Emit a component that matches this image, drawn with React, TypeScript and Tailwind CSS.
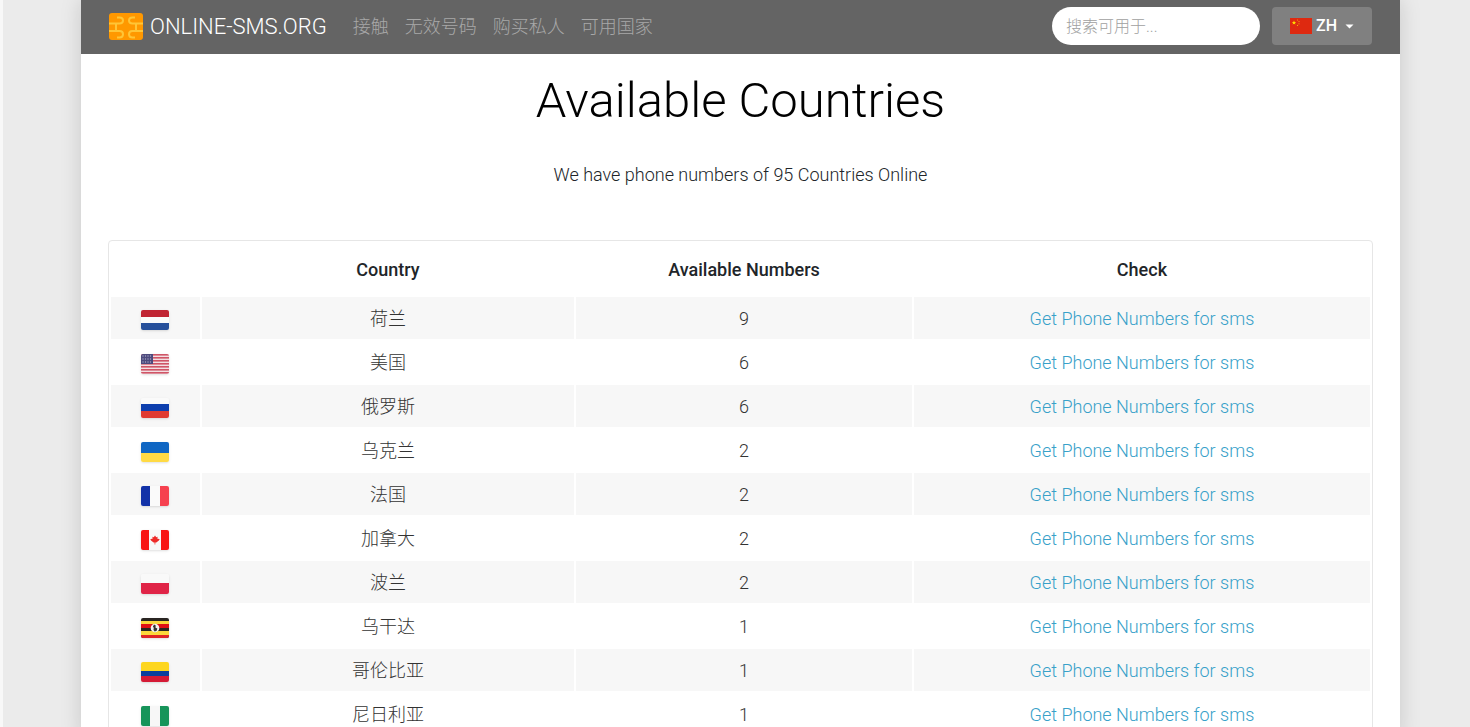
import type { ReactNode } from "react";

type Country = {
  code: string;
  name: string;
  numbers: number;
  flag: ReactNode;
};

const starDots = [2, 4.5, 7, 9.5].flatMap((x) => [2, 5, 8].map((y) => ({ x, y })));

const countries: Country[] = [
  {
    code: "nl",
    name: "荷兰",
    numbers: 9,
    flag: (
      <>
        <rect width="28" height="7" fill="#c02433" />
        <rect y="7" width="28" height="6" fill="#fafafa" />
        <rect y="13" width="28" height="7" fill="#27509b" />
      </>
    ),
  },
  {
    code: "us",
    name: "美国",
    numbers: 6,
    flag: (
      <>
        <rect width="28" height="20" fill="#f3dfe2" />
        {[0, 3, 6, 9, 12, 15, 18].map((y) => (
          <rect key={y} y={y} width="28" height="1.6" fill="#cf5566" />
        ))}
        <rect width="12" height="10" fill="#4c4a7d" />
        {starDots.map(({ x, y }) => (
          <circle key={`${x}-${y}`} cx={x} cy={y} r="0.7" fill="#a9a8c4" />
        ))}
      </>
    ),
  },
  {
    code: "ru",
    name: "俄罗斯",
    numbers: 6,
    flag: (
      <>
        <rect width="28" height="7" fill="#fafafa" />
        <rect y="6" width="28" height="8" fill="#0d3fae" />
        <rect y="13" width="28" height="7" fill="#e03a31" />
      </>
    ),
  },
  {
    code: "ua",
    name: "乌克兰",
    numbers: 2,
    flag: (
      <>
        <rect width="28" height="11" fill="#0f66c3" />
        <rect y="11" width="28" height="9" fill="#ffda44" />
      </>
    ),
  },
  {
    code: "fr",
    name: "法国",
    numbers: 2,
    flag: (
      <>
        <rect width="10" height="20" fill="#1232a8" />
        <rect x="9" width="10" height="20" fill="#fafafa" />
        <rect x="19" width="9" height="20" fill="#f6414f" />
      </>
    ),
  },
  {
    code: "ca",
    name: "加拿大",
    numbers: 2,
    flag: (
      <>
        <rect width="28" height="20" fill="#f8f8f8" />
        <rect width="8" height="20" fill="#f81614" />
        <rect x="20" width="8" height="20" fill="#f81614" />
        <path
          d="M14 5.5l1.2 1.8 1.4-.5-.2 2 2.3.2-.8 1.6-2.6 2h-1v2h-.7v-2h-1l-2.6-2-.7-1.6 2.3-.2-.2-2 1.4.5z"
          fill="#ee2a28"
        />
      </>
    ),
  },
  {
    code: "pl",
    name: "波兰",
    numbers: 2,
    flag: (
      <>
        <rect width="28" height="10" fill="#f9f9f9" />
        <rect y="9" width="28" height="11" fill="#e02447" />
      </>
    ),
  },
  {
    code: "ug",
    name: "乌干达",
    numbers: 1,
    flag: (
      <>
        <rect width="28" height="20" fill="#292522" />
        <rect y="3" width="28" height="4" fill="#fbd63a" />
        <rect y="6" width="28" height="4" fill="#df1014" />
        <rect y="13" width="28" height="4" fill="#fbd63a" />
        <rect y="17" width="28" height="3" fill="#e02324" />
        <circle cx="14" cy="10" r="4.3" fill="#f1f1f1" />
        <path d="M13 6.6l1.8 1-.4 2 1.9.8-.6 2.4-2 .8-1.2-1.6.3-2.2-.9-1z" fill="#35312f" />
      </>
    ),
  },
  {
    code: "co",
    name: "哥伦比亚",
    numbers: 1,
    flag: (
      <>
        <rect width="28" height="10" fill="#fdd61e" />
        <rect y="9" width="28" height="6" fill="#0a3f9c" />
        <rect y="14" width="28" height="6" fill="#d51a35" />
      </>
    ),
  },
  {
    code: "ng",
    name: "尼日利亚",
    numbers: 1,
    flag: (
      <>
        <rect width="28" height="20" fill="#f7f7f7" />
        <rect width="9" height="20" fill="#17945a" />
        <rect x="19" width="9" height="20" fill="#17945a" />
      </>
    ),
  },
];

const navLinks = ["接触", "无效号码", "购买私人", "可用国家"];

const Logo = () => (
  <svg width="34" height="27" viewBox="0 0 34 27" aria-hidden="true">
    <rect width="34" height="27" rx="3" fill="#ff9800" />
    <g fill="none" stroke="#ffc536" strokeWidth="2">
      <path d="M0 10.5H10.500c2.200 0 3.500-1.200 3.500-3s-1.300-3-3.500-3H8M0 18H10.500c2.200 0 3.500 1.200 3.500 3.200s-1.300 3.200-3.500 3.200H8M7 10.500V18" />
      <path d="M34 10.500H23.500c-2.200 0-3.500-1.200-3.500-3s1.300-3 3.500-3H26M34 18H23.500c-2.200 0-3.500 1.200-3.500 3.200s1.300 3.200 3.500 3.200H26M27 10.500V18" />
    </g>
  </svg>
);

const ChinaFlag = () => (
  <svg width="22" height="16" viewBox="0 0 22 16" aria-hidden="true">
    <rect width="22" height="16" fill="#de2910" />
    <path d="M4 2.500l.6 1.500h1.600l-1.300 1 .5 1.600L4 5.700l-1.400.9.5-1.600-1.300-1h1.600z" fill="#ffde00" />
    <g fill="#f7a80c">
      <circle cx="7.500" cy="2" r="0.600" />
      <circle cx="9" cy="3.600" r="0.600" />
      <circle cx="9" cy="5.800" r="0.600" />
      <circle cx="7.500" cy="7.400" r="0.600" />
    </g>
  </svg>
);

const Flag = ({ country }: { country: Country }) => (
  <svg
    className="mx-auto mt-1 block overflow-hidden rounded-xs shadow-sm"
    width="28"
    height="20"
    viewBox="0 0 28 20"
    role="img"
    aria-label={country.name}
  >
    {country.flag}
  </svg>
);

const Navbar = () => (
  <nav className="flex h-[54px] items-center bg-[#646464] px-7 pb-[2px]">
    <a href="#" className="flex items-center gap-[7px] text-[22px] font-light text-white">
      <Logo />
      ONLINE-SMS.ORG
    </a>
    <ul className="ml-[26px] flex gap-4 text-[18px] font-light text-[#a8a8a8]">
      {navLinks.map((label) => (
        <li key={label}>
          <a href="#">{label}</a>
        </li>
      ))}
    </ul>
    <form className="ml-auto flex items-center gap-3">
      <input
        type="search"
        aria-label="搜索可用于"
        placeholder="搜索可用于..."
        className="h-[38px] w-52 rounded-full bg-white px-[14px] text-base font-light text-gray-700 placeholder:text-[#a0a0a0]"
      />
      <button
        type="button"
        className="flex h-[38px] w-[100px] items-center justify-center rounded bg-[#808080] text-base font-medium text-white"
      >
        <ChinaFlag />
        <span className="ml-1">ZH</span>
        <svg className="ml-2" width="9" height="5" viewBox="0 0 9 5" aria-hidden="true">
          <path d="M0.500 0.500h8L4.500 4.500z" fill="#fff" />
        </svg>
      </button>
    </form>
  </nav>
);

const CountryTable = () => (
  <div className="rounded border border-[#e6e6e6]">
    <table className="w-full table-fixed border-separate border-spacing-[2px] text-center text-[18px] font-light text-[#333]">
      <colgroup>
        <col className="w-[7.1%]" />
        <col className="w-[29.7%]" />
        <col className="w-[26.8%]" />
        <col className="w-[36.4%]" />
      </colgroup>
      <thead className="text-[#212529]">
        <tr className="h-[52px] *:font-medium">
          <td></td>
          <th>Country</th>
          <th>Available Numbers</th>
          <th>Check</th>
        </tr>
      </thead>
      <tbody>
        {countries.map((country) => (
          <tr key={country.code} className="h-[42px] odd:*:bg-[#f7f7f7]">
            <td>
              <Flag country={country} />
            </td>
            <td>{country.name}</td>
            <td>{country.numbers}</td>
            <td>
              <a href="#" className="text-[#38a1c9]">
                Get Phone Numbers for sms
              </a>
            </td>
          </tr>
        ))}
      </tbody>
    </table>
  </div>
);

const App = () => {
  return (
    <div className="h-screen overflow-hidden border-l-3 border-[#f8f8f8] bg-[#ebebeb] pr-[70px] pl-[78px] font-['Roboto','Noto_Sans_CJK_SC',sans-serif]">
      <div className="min-h-screen bg-white shadow-[0_0_20px_rgba(0,0,0,0.15)]">
        <Navbar />
        <main className="px-[27px] text-center">
          <h1 className="pt-[17px] text-[49px] leading-[60px] font-light text-black">
            Available Countries
          </h1>
          <p className="mt-8 mb-[53px] text-[18px] leading-6 font-light text-[#212529]">
            We have phone numbers of 95 Countries Online
          </p>
          <CountryTable />
        </main>
      </div>
    </div>
  );
};

export default App;
